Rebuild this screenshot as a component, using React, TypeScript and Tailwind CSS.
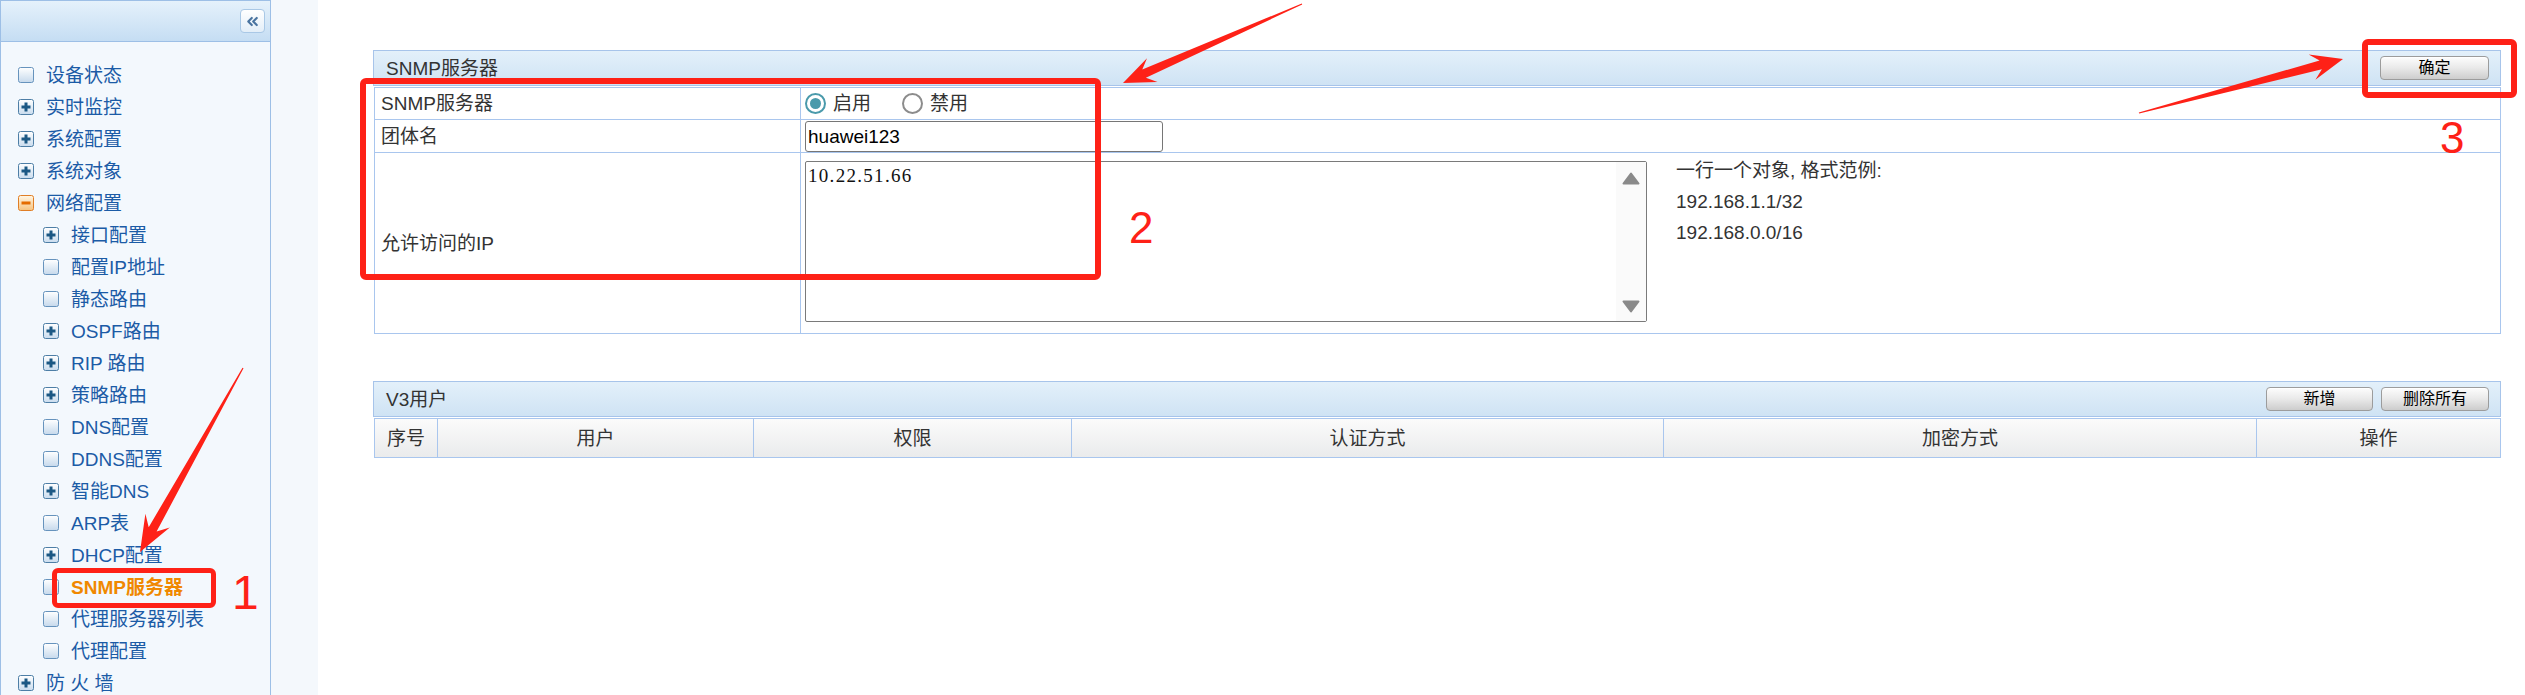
import React from "react";
import { ChevronsLeft } from "lucide-react";

type Item = { label: string; level: 1 | 2; icon: "leaf" | "plus" | "minus"; active?: boolean };

const items: Item[] = [
  { label: "设备状态", level: 1, icon: "leaf" },
  { label: "实时监控", level: 1, icon: "plus" },
  { label: "系统配置", level: 1, icon: "plus" },
  { label: "系统对象", level: 1, icon: "plus" },
  { label: "网络配置", level: 1, icon: "minus" },
  { label: "接口配置", level: 2, icon: "plus" },
  { label: "配置IP地址", level: 2, icon: "leaf" },
  { label: "静态路由", level: 2, icon: "leaf" },
  { label: "OSPF路由", level: 2, icon: "plus" },
  { label: "RIP 路由", level: 2, icon: "plus" },
  { label: "策略路由", level: 2, icon: "plus" },
  { label: "DNS配置", level: 2, icon: "leaf" },
  { label: "DDNS配置", level: 2, icon: "leaf" },
  { label: "智能DNS", level: 2, icon: "plus" },
  { label: "ARP表", level: 2, icon: "leaf" },
  { label: "DHCP配置", level: 2, icon: "plus" },
  { label: "SNMP服务器", level: 2, icon: "leaf", active: true },
  { label: "代理服务器列表", level: 2, icon: "leaf" },
  { label: "代理配置", level: 2, icon: "leaf" },
  { label: "防 火 墙", level: 1, icon: "plus" },
];

function TreeIcon({ kind }: { kind: Item["icon"] }) {
  if (kind === "minus") {
    return (
      <svg width="16" height="16" viewBox="0 0 16 16" className="shrink-0">
        <defs>
          <linearGradient id="gm" x1="0" y1="0" x2="0" y2="1">
            <stop offset="0" stopColor="#fff7e6" />
            <stop offset="1" stopColor="#f6c37e" />
          </linearGradient>
        </defs>
        <rect x="0.5" y="0.5" width="15" height="15" rx="2" fill="url(#gm)" stroke="#e07e26" />
        <path d="M3.5 8h9" stroke="#e46c00" strokeWidth="3" />
      </svg>
    );
  }
  if (kind === "plus") {
    return (
      <svg width="16" height="16" viewBox="0 0 16 16" className="shrink-0">
        <defs>
          <linearGradient id="gp" x1="0" y1="0" x2="0" y2="1">
            <stop offset="0" stopColor="#ffffff" />
            <stop offset="1" stopColor="#c9dcee" />
          </linearGradient>
        </defs>
        <rect x="0.5" y="0.5" width="15" height="15" rx="2" fill="url(#gp)" stroke="#4d7ea6" />
        <path d="M3.5 8h9M8 3.5v9" stroke="#1b5884" strokeWidth="3" />
      </svg>
    );
  }
  return (
    <svg width="16" height="16" viewBox="0 0 16 16" className="shrink-0">
      <defs>
        <linearGradient id="gl" x1="0" y1="0" x2="0" y2="1">
          <stop offset="0" stopColor="#ffffff" />
          <stop offset="1" stopColor="#c6d9ec" />
        </linearGradient>
      </defs>
      <rect x="0.5" y="0.5" width="15" height="15" rx="2" fill="url(#gl)" stroke="#6693bd" />
    </svg>
  );
}

function arrowPoints(
  tx: number,
  ty: number,
  hx: number,
  hy: number,
  headLen: number,
  headHalf: number,
  shaftHalf: number
) {
  const dx = hx - tx;
  const dy = hy - ty;
  const len = Math.sqrt(dx * dx + dy * dy);
  const ux = dx / len;
  const uy = dy / len;
  const nx = -uy;
  const ny = ux;
  const bx = hx - ux * headLen;
  const by = hy - uy * headLen;
  const ix = hx - ux * headLen * 0.72;
  const iy = hy - uy * headLen * 0.72;
  const pts: [number, number][] = [
    [tx + nx * 0.6, ty + ny * 0.6],
    [ix + nx * shaftHalf, iy + ny * shaftHalf],
    [bx + nx * headHalf, by + ny * headHalf],
    [hx, hy],
    [bx - nx * headHalf, by - ny * headHalf],
    [ix - nx * shaftHalf, iy - ny * shaftHalf],
    [tx - nx * 0.6, ty - ny * 0.6],
  ];
  return pts.map((p) => `${p[0].toFixed(1)},${p[1].toFixed(1)}`).join(" ");
}

function GrayButton({ children, w }: { children: React.ReactNode; w: string }) {
  return (
    <button
      className={`${w} h-[24px] rounded-[4px] border border-[#9c9c9c] bg-linear-to-b from-[#fdfdfd] via-[#e9e9e9] to-[#cdcdcd] text-[16px] leading-none text-black shadow-[inset_0_1px_0_#ffffff]`}
    >
      {children}
    </button>
  );
}

function Radio({ checked }: { checked: boolean }) {
  return checked ? (
    <span className="w-[21px] h-[21px] rounded-full border-2 border-[#4a9aab] bg-white flex items-center justify-center shrink-0">
      <span className="w-[11px] h-[11px] rounded-full bg-[#4a9aab]" />
    </span>
  ) : (
    <span className="block w-[21px] h-[21px] rounded-full border-2 border-[#8c8c8c] bg-white shrink-0" />
  );
}

export default function App() {
  return (
    <div className="relative flex w-[2525px] h-[695px] overflow-hidden bg-white font-['Liberation_Sans','Noto_Sans_CJK_SC',sans-serif]">
      {/* Sidebar */}
      <aside className="w-[271px] shrink-0 flex flex-col bg-[#f3f8fd] border-l border-r border-[#9dbfe6]">
        <div className="h-[42px] shrink-0 flex items-center justify-end pr-[5px] border-t border-b border-[#9dbfe6] bg-linear-to-b from-[#e5f1fb] to-[#c5ddf3]">
          <div className="w-[25px] h-[24px] rounded-[4px] border border-[#a9c8e6] bg-linear-to-b from-white to-[#e3eef8] flex items-center justify-center">
            <ChevronsLeft size={17} strokeWidth={3} color="#4a74a0" />
          </div>
        </div>
        <nav className="pt-[17px] flex flex-col">
          {items.map((it) => (
            <div
              key={it.label}
              className={`h-[32px] flex items-center ${it.level === 1 ? "pl-[17px]" : "pl-[42px]"}`}
            >
              <TreeIcon kind={it.icon} />
              <span
                className={`ml-[12px] text-[19px] leading-none whitespace-pre ${
                  it.active ? "text-[#f08800] font-bold" : "text-[#1b5ba6]"
                }`}
              >
                {it.label}
              </span>
            </div>
          ))}
        </nav>
      </aside>
      <div className="w-[47px] shrink-0 bg-[#f4f8fc]" />

      {/* Main */}
      <main className="flex-1 pl-[55px] pr-[24px] pt-[50px] text-[#333]">
        {/* SNMP panel */}
        <section>
          <div className="h-[36px] flex items-center justify-between pl-[12px] pr-[11px] border border-[#a7c4ea] bg-linear-to-b from-[#e3f0fa] to-[#cfe3f4]">
            <span className="text-[19px] leading-none">SNMP服务器</span>
            <GrayButton w="w-[109px]">确定</GrayButton>
          </div>
          <div className="mt-px ml-px border border-[#a9c6ee] text-[19px] leading-none">
            <div className="h-[32px] flex border-b border-[#a9c6ee]">
              <div className="w-[426px] shrink-0 border-r border-[#a9c6ee] pl-[6px] flex items-center">SNMP服务器</div>
              <div className="flex-1 flex items-center pl-[4px]">
                <Radio checked />
                <span className="ml-[7px]">启用</span>
                <span className="ml-[31px] flex items-center">
                  <Radio checked={false} />
                </span>
                <span className="ml-[7px]">禁用</span>
              </div>
            </div>
            <div className="h-[33px] flex border-b border-[#a9c6ee]">
              <div className="w-[426px] shrink-0 border-r border-[#a9c6ee] pl-[6px] flex items-center">团体名</div>
              <div className="flex-1 pl-[4px] pt-px">
                <input
                  readOnly
                  defaultValue="huawei123"
                  className="w-[358px] h-[31px] border border-[#767676] rounded-[3px] px-[2px] text-[19px] text-black outline-none bg-white font-['Liberation_Sans',sans-serif]"
                />
              </div>
            </div>
            <div className="h-[180px] flex">
              <div className="w-[426px] shrink-0 border-r border-[#a9c6ee] pl-[6px] flex items-center">允许访问的IP</div>
              <div className="flex-1 flex pl-[4px]">
                <div className="mt-[8px] w-[842px] h-[161px] border border-[#7a7a7a] rounded-[2px] flex bg-white">
                  <div className="flex-1 pl-[2px] pt-[4px] font-['Liberation_Serif',serif] text-[19px] leading-[20px] tracking-[1.3px] text-[#111]">
                    10.22.51.66
                  </div>
                  <div className="w-[30px] bg-[#fafafa] flex flex-col items-center justify-between pt-[10px] pb-[8px]">
                    <svg width="18" height="13" viewBox="0 0 18 13">
                      <path d="M9 1.5 L16.5 11.5 H1.5 Z" fill="#8a8a8a" stroke="#8a8a8a" strokeWidth="2" strokeLinejoin="round" />
                    </svg>
                    <svg width="18" height="13" viewBox="0 0 18 13">
                      <path d="M9 11.5 L16.5 1.5 H1.5 Z" fill="#8a8a8a" stroke="#8a8a8a" strokeWidth="2" strokeLinejoin="round" />
                    </svg>
                  </div>
                </div>
                <div className="ml-[29px] pt-[2px] leading-[31px] text-[19px]">
                  <div>一行一个对象, 格式范例:</div>
                  <div>192.168.1.1/32</div>
                  <div>192.168.0.0/16</div>
                </div>
              </div>
            </div>
          </div>
        </section>

        {/* V3 users panel */}
        <section className="mt-[47px]">
          <div className="h-[36px] flex items-center justify-between pl-[12px] pr-[11px] border border-[#a7c4ea] bg-linear-to-b from-[#e3f0fa] to-[#cfe3f4]">
            <span className="text-[19px] leading-none">V3用户</span>
            <div className="flex gap-[8px]">
              <GrayButton w="w-[107px]">新增</GrayButton>
              <GrayButton w="w-[108px]">删除所有</GrayButton>
            </div>
          </div>
          <div className="mt-px ml-px h-[40px] flex border border-[#a9c6ee] bg-linear-to-b from-[#fbfbfb] to-[#eaebec] text-[19px] leading-none">
            <div className="w-[63px] shrink-0 border-r border-[#a9c6ee] flex items-center justify-center">序号</div>
            <div className="w-[316px] shrink-0 border-r border-[#a9c6ee] flex items-center justify-center">用户</div>
            <div className="w-[318px] shrink-0 border-r border-[#a9c6ee] flex items-center justify-center">权限</div>
            <div className="w-[592px] shrink-0 border-r border-[#a9c6ee] flex items-center justify-center">认证方式</div>
            <div className="w-[593px] shrink-0 border-r border-[#a9c6ee] flex items-center justify-center">加密方式</div>
            <div className="flex-1 flex items-center justify-center">操作</div>
          </div>
        </section>
      </main>

      {/* Annotation overlay */}
      <div className="pointer-events-none absolute inset-0">
        <svg width="2525" height="695" className="absolute left-0 top-0">
          <polygon points={arrowPoints(243, 368, 140, 552, 36, 14, 4.5)} fill="#fe2117" />
          <polygon points={arrowPoints(1302, 4, 1123, 83, 32, 13, 4.5)} fill="#fe2117" />
          <polygon points={arrowPoints(2139, 113, 2343, 59, 32, 13, 4.5)} fill="#fe2117" />
        </svg>
        <div className="absolute left-[52px] top-[568px] w-[164px] h-[40px] border-[5px] border-[#fe2117] rounded-[6px]" />
        <div className="absolute left-[360px] top-[78px] w-[741px] h-[202px] border-[6px] border-[#fe2117] rounded-[6px]" />
        <div className="absolute left-[2362px] top-[39px] w-[155px] h-[59px] border-[6px] border-[#fe2117] rounded-[6px]" />
        <span className="absolute left-[232px] top-[569px] text-[48px] leading-none text-[#fe2117] font-['Liberation_Sans',sans-serif]">1</span>
        <span className="absolute left-[1129px] top-[206px] text-[44px] leading-none text-[#fe2117] font-['Liberation_Sans',sans-serif]">2</span>
        <span className="absolute left-[2440px] top-[116px] text-[44px] leading-none text-[#fe2117] font-['Liberation_Sans',sans-serif]">3</span>
      </div>
    </div>
  );
}
